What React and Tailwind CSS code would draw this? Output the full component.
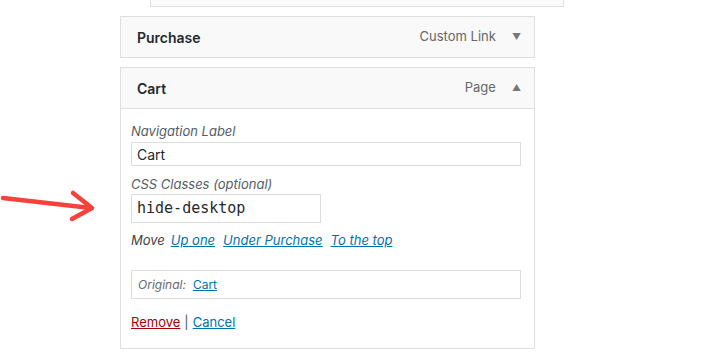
export default function App() {
  const font = { fontFamily: 'Inter, "Liberation Sans", sans-serif' };
  return (
    <div className="relative w-[709px] h-[364px] bg-white overflow-hidden text-[#23282d]" style={font}>
      {/* red annotation arrow */}
      <svg className="absolute left-0 top-[186px]" width="100" height="40" viewBox="0 186 100 40">
        <g stroke="#f5423a" strokeWidth="4.5" strokeLinecap="round" strokeLinejoin="round" fill="none">
          <path d="M3 198 L91 208" />
          <path d="M73 193 L92 208 L72 219" />
        </g>
      </svg>

      <div className="ml-[150px] w-[414px] h-[7px] border-x border-b border-[#e0e0e0] bg-[#fbfbfb]" />

      <div className="ml-[120px] w-[415px] mt-[9px] flex flex-col gap-[9px]">
        <div className="h-[42px] border border-[#dfdfdf] bg-[#f9f9f9] flex items-center pl-[16px] pr-[13px]">
          <span className="text-[14px] font-semibold">Purchase</span>
          <span className="ml-auto text-[13px] text-[#666]">Custom Link</span>
          <span className="ml-[16px] text-[9px] text-[#777]">▼</span>
        </div>

        <div className="border border-[#dfdfdf]">
          <div className="h-[41px] bg-[#f9f9f9] border-b border-[#dfdfdf] flex items-center pl-[16px] pr-[13px]">
            <span className="text-[14px] font-semibold">Cart</span>
            <span className="ml-auto text-[13px] text-[#666]">Page</span>
            <span className="ml-[16px] text-[9px] text-[#777]">▲</span>
          </div>
          <div className="px-[10px] pt-[13px] pb-[17px] text-[13px]">
            <div className="h-[18px] leading-[18px] italic text-[#555d66]">Navigation Label</div>
            <div className="mt-[2px] w-[390px] h-[24px] border border-[#dddddd] flex items-center px-[5px] text-[14px]">Cart</div>
            <div className="mt-[9px] h-[18px] leading-[18px] italic text-[#555d66]">CSS Classes (optional)</div>
            <div className="mt-[1px] w-[190px] h-[29px] border border-[#dddddd] flex items-center px-[5px] text-[15px]" style={{ fontFamily: '"DejaVu Sans Mono", monospace' }}>hide-desktop</div>
            <div className="mt-[8px] h-[18px] leading-[18px] italic flex gap-[8px]">
              <span className="text-[#444] mr-[-2px]">Move</span>
              <a className="text-[#0073aa] underline">Up one</a>
              <a className="text-[#0073aa] underline">Under Purchase</a>
              <a className="text-[#0073aa] underline">To the top</a>
            </div>
            <div className="mt-[21px] w-[390px] h-[29px] border border-[#dddddd] flex items-center px-[6px] gap-[7px] text-[12px]">
              <span className="italic text-[#646970]">Original:</span>
              <a className="text-[#0073aa] underline">Cart</a>
            </div>
            <div className="mt-[14px] h-[18px] leading-[18px] text-[13px]">
              <a className="text-[#a00] underline">Remove</a>
              <span className="text-[#555] mx-[4px]">|</span>
              <a className="text-[#0073aa] underline">Cancel</a>
            </div>
          </div>
        </div>
      </div>
    </div>
  );
}
